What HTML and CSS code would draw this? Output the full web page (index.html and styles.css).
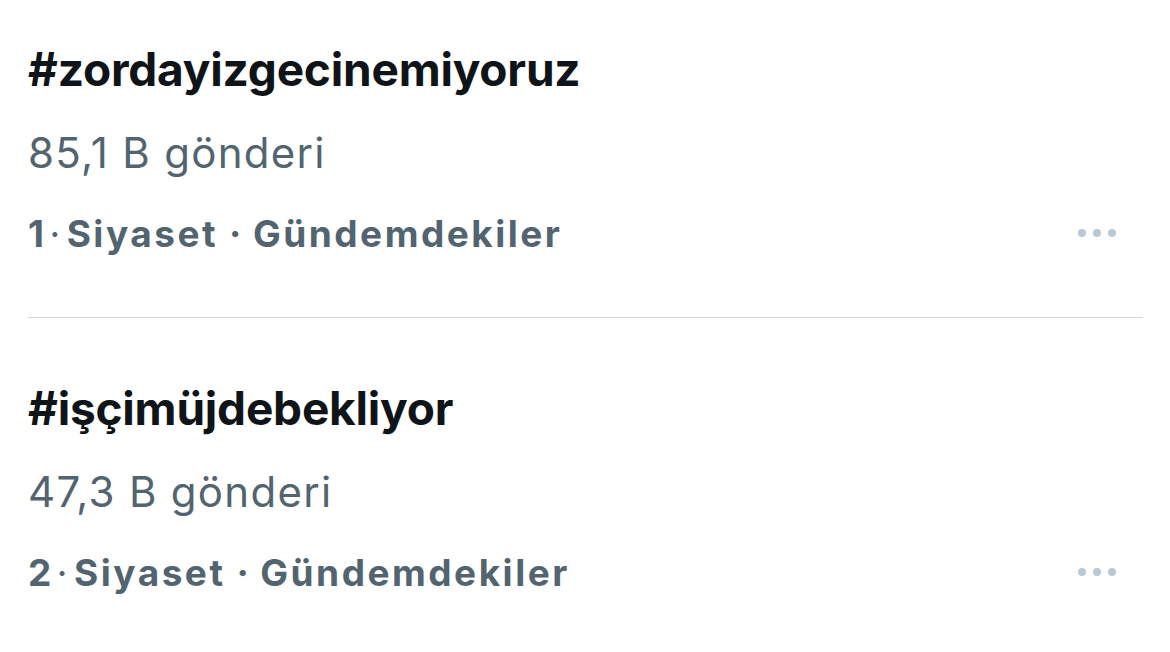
FILE: index.html
```html
<!DOCTYPE html>
<html lang="tr">
<head>
<meta charset="utf-8">
<title>Gündem</title>
<link rel="stylesheet" href="styles.css">
</head>
<body>
<ul class="trends">
  <li class="trend">
    <div class="trend-title">#zordayizgecinemiyoruz</div>
    <div class="trend-count">85,1 B gönderi</div>
    <div class="trend-meta">
      <span class="meta-text">1<span class="sep-small">·</span>Siyaset<span class="sep">·</span>Gündemdekiler</span>
      <svg class="more" width="42" height="10" viewBox="0 0 42 10" aria-hidden="true">
        <circle cx="5" cy="5" r="4"/>
        <circle cx="20" cy="5" r="4"/>
        <circle cx="35" cy="5" r="4"/>
      </svg>
    </div>
  </li>
  <li class="trend">
    <div class="trend-title">#işçimüjdebekliyor</div>
    <div class="trend-count">47,3 B gönderi</div>
    <div class="trend-meta">
      <span class="meta-text">2<span class="sep-small">·</span>Siyaset<span class="sep">·</span>Gündemdekiler</span>
      <svg class="more" width="42" height="10" viewBox="0 0 42 10" aria-hidden="true">
        <circle cx="5" cy="5" r="4"/>
        <circle cx="20" cy="5" r="4"/>
        <circle cx="35" cy="5" r="4"/>
      </svg>
    </div>
  </li>
</ul>
</body>
</html>
```

FILE: styles.css
```css
html, body {
  margin: 0;
  padding: 0;
  background: #ffffff;
}

body {
  font-family: Inter, "Noto Sans", "DejaVu Sans", sans-serif;
  overflow: hidden;
}

.trends {
  list-style: none;
  margin: -21px 0 0 0;
  padding: 0 27px 0 28px;
}

.trend {
  padding: 60px 0 44px;
  border-bottom: 1px solid #cfd9de;
}

.trend-title {
  font-size: 46px;
  line-height: 60px;
  font-weight: 700;
  color: #0f1419;
  letter-spacing: -0.2px;
}

.trend-count {
  margin-top: 14px;
  font-size: 42px;
  line-height: 80px;
  font-weight: 400;
  color: #536471;
  letter-spacing: 1.3px;
}

.trend-meta {
  display: flex;
  align-items: center;
  justify-content: space-between;
  height: 80px;
  font-size: 37px;
  font-weight: 700;
  color: #536471;
  letter-spacing: 2.5px;
}

.sep-small {
  margin: 0 4px 0 3px;
  font-weight: 400;
}

.sep {
  margin: 0 9px 0 11px;
}

.more {
  margin-right: 24px;
  fill: #b9c8d6;
}
```
